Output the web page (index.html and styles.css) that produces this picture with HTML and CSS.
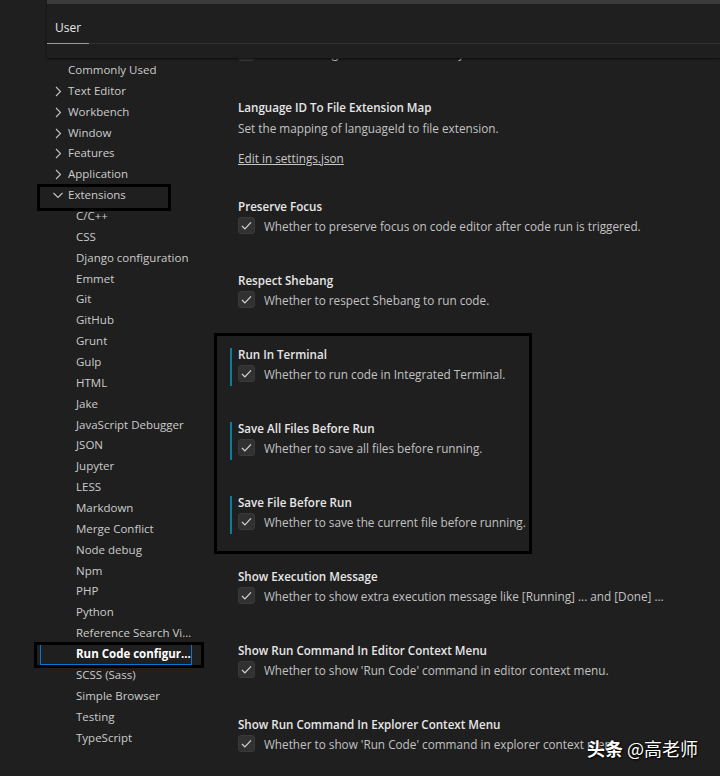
FILE: index.html
```html
<!DOCTYPE html>
<html lang="en">
<head>
    <meta charset="UTF-8">
    <title>Settings</title>
    <link rel="stylesheet" href="styles.css">
</head>
<body>

    <header class="header">
        <div class="search-edge"></div>
        <div class="tabs"><span class="tab">User</span></div>
    </header>

    <div class="page">
        <nav class="tree">
            <div class="row top">Commonly Used</div>
            <div class="row"><svg class="chev" viewBox="0 0 12 12"><path d="M4 2 L8.5 6.5 L4 11"/></svg>Text Editor</div>
            <div class="row"><svg class="chev" viewBox="0 0 12 12"><path d="M4 2 L8.5 6.5 L4 11"/></svg>Workbench</div>
            <div class="row"><svg class="chev" viewBox="0 0 12 12"><path d="M4 2 L8.5 6.5 L4 11"/></svg>Window</div>
            <div class="row"><svg class="chev" viewBox="0 0 12 12"><path d="M4 2 L8.5 6.5 L4 11"/></svg>Features</div>
            <div class="row"><svg class="chev" viewBox="0 0 12 12"><path d="M4 2 L8.5 6.5 L4 11"/></svg>Application</div>
            <div class="row"><svg class="chev" viewBox="0 0 12 12"><path d="M1.5 4 L6 8.5 L10.5 4"/></svg>Extensions</div>
            <div class="row child">C/C++</div>
            <div class="row child">CSS</div>
            <div class="row child">Django configuration</div>
            <div class="row child">Emmet</div>
            <div class="row child">Git</div>
            <div class="row child">GitHub</div>
            <div class="row child">Grunt</div>
            <div class="row child">Gulp</div>
            <div class="row child">HTML</div>
            <div class="row child">Jake</div>
            <div class="row child">JavaScript Debugger</div>
            <div class="row child">JSON</div>
            <div class="row child">Jupyter</div>
            <div class="row child">LESS</div>
            <div class="row child">Markdown</div>
            <div class="row child">Merge Conflict</div>
            <div class="row child">Node debug</div>
            <div class="row child">Npm</div>
            <div class="row child">PHP</div>
            <div class="row child">Python</div>
            <div class="row child">Reference Search View</div>
            <div class="row child selected">Run Code configuration</div>
            <div class="row child">SCSS (Sass)</div>
            <div class="row child">Simple Browser</div>
            <div class="row child">Testing</div>
            <div class="row child">TypeScript</div>
        </nav>

        <main class="content">
            <div class="setting">
                <div class="title">Ignore Selection</div>
                <div class="check-row">
                    <span class="checkbox"></span>
                    <span class="desc">Whether to ignore selection to always run entire file.</span>
                </div>
            </div>

            <div class="setting lang">
                <div class="title">Language ID To File Extension Map</div>
                <div class="text">Set the mapping of languageId to file extension.</div>
                <div class="link">Edit in settings.json</div>
            </div>

            <div class="setting">
                <div class="title">Preserve Focus</div>
                <div class="check-row">
                    <span class="checkbox"><svg viewBox="0 0 16 16"><path d="M3.2 8.6 L6.3 11.6 L12.8 4.6"/></svg></span>
                    <span class="desc">Whether to preserve focus on code editor after code run is triggered.</span>
                </div>
            </div>

            <div class="setting">
                <div class="title">Respect Shebang</div>
                <div class="check-row">
                    <span class="checkbox"><svg viewBox="0 0 16 16"><path d="M3.2 8.6 L6.3 11.6 L12.8 4.6"/></svg></span>
                    <span class="desc">Whether to respect Shebang to run code.</span>
                </div>
            </div>

            <div class="setting modified">
                <div class="title">Run In Terminal</div>
                <div class="check-row">
                    <span class="checkbox"><svg viewBox="0 0 16 16"><path d="M3.2 8.6 L6.3 11.6 L12.8 4.6"/></svg></span>
                    <span class="desc">Whether to run code in Integrated Terminal.</span>
                </div>
            </div>

            <div class="setting modified">
                <div class="title">Save All Files Before Run</div>
                <div class="check-row">
                    <span class="checkbox"><svg viewBox="0 0 16 16"><path d="M3.2 8.6 L6.3 11.6 L12.8 4.6"/></svg></span>
                    <span class="desc">Whether to save all files before running.</span>
                </div>
            </div>

            <div class="setting modified">
                <div class="title">Save File Before Run</div>
                <div class="check-row">
                    <span class="checkbox"><svg viewBox="0 0 16 16"><path d="M3.2 8.6 L6.3 11.6 L12.8 4.6"/></svg></span>
                    <span class="desc">Whether to save the current file before running.</span>
                </div>
            </div>

            <div class="setting">
                <div class="title">Show Execution Message</div>
                <div class="check-row">
                    <span class="checkbox"><svg viewBox="0 0 16 16"><path d="M3.2 8.6 L6.3 11.6 L12.8 4.6"/></svg></span>
                    <span class="desc">Whether to show extra execution message like [Running] ... and [Done] ...</span>
                </div>
            </div>

            <div class="setting">
                <div class="title">Show Run Command In Editor Context Menu</div>
                <div class="check-row">
                    <span class="checkbox"><svg viewBox="0 0 16 16"><path d="M3.2 8.6 L6.3 11.6 L12.8 4.6"/></svg></span>
                    <span class="desc">Whether to show 'Run Code' command in editor context menu.</span>
                </div>
            </div>

            <div class="setting">
                <div class="title">Show Run Command In Explorer Context Menu</div>
                <div class="check-row">
                    <span class="checkbox"><svg viewBox="0 0 16 16"><path d="M3.2 8.6 L6.3 11.6 L12.8 4.6"/></svg></span>
                    <span class="desc">Whether to show 'Run Code' command in explorer context menu.</span>
                </div>
            </div>
        </main>
    </div>

    <!-- annotation boxes drawn over the screenshot -->
    <div class="mark mark-ext"></div>
    <div class="mark mark-run"></div>
    <div class="mark mark-group"></div>

    <div class="watermark"><b>头条</b> @高老师</div>

</body>
</html>
```

FILE: styles.css
```css
body {
    margin: 0;
    background: #1f1f1f;
    color: #cccccc;
    font-family: "Open Sans", "Noto Sans", sans-serif;
    font-size: 11.75px;
    height: 776px;
    overflow: hidden;
    position: relative;
}

.header {
    position: absolute;
    top: 0;
    left: 47px;
    right: 0;
    height: 58px;
    background: #1f1f1f;
    box-shadow: 0 1px 2px #0c0c0c;
    z-index: 2;
}

.search-edge {
    height: 4px;
    background: #3a3a3a;
}

.tabs {
    height: 40px;
    box-shadow: inset 0 -1px #303030;
}

.tab {
    display: inline-block;
    box-sizing: border-box;
    height: 40px;
    padding: 16px 8px 0;
    line-height: 16px;
    font-size: 12px;
    color: #e7e7e7;
    border-bottom: 1px solid #9a9a9a;
}

.page {
    display: flex;
}

.tree {
    width: 230px;
    flex-shrink: 0;
    padding-top: 60px;
    font-size: 11.5px;
}

.row {
    width: 153px;
    height: 20.87px;
    line-height: 20.87px;
    margin-left: 40px;
    box-sizing: border-box;
    padding-left: 12px;
    white-space: nowrap;
    overflow: hidden;
    text-overflow: ellipsis;
}

.row.top {
    padding-left: 28px;
}

.row.child {
    padding-left: 36px;
}

.row.selected {
    width: 152px;
    color: #ffffff;
    font-weight: bold;
    outline: 1px solid #0078d4;
    outline-offset: -1px;
}

.chev {
    width: 12px;
    height: 12px;
    margin-right: 4px;
    vertical-align: -2px;
    fill: none;
    stroke: #c5c5c5;
    stroke-width: 1.1;
}

.content {
    flex: 1;
    padding-top: 26.5px;
}

.setting {
    border-left: 2px solid transparent;
    padding: 0 0 1px 6px;
    margin-bottom: 36px;
}

.setting.modified {
    border-left-color: #0c7d9d;
}

.setting.lang {
    padding-bottom: 0;
    margin-bottom: 33px;
}

.title {
    line-height: 13px;
    font-size: 11.6px;
    font-weight: 600;
    color: #e7e7e7;
}

.text {
    margin-top: 5px;
    line-height: 18px;
    color: #c2c2c2;
}

.link {
    margin-top: 12px;
    line-height: 18px;
    color: #c8c8c8;
    text-decoration: underline;
}

.check-row {
    margin-top: 2px;
    height: 22px;
    display: flex;
    align-items: center;
    gap: 9px;
    white-space: nowrap;
}

.checkbox {
    width: 17px;
    height: 17px;
    box-sizing: border-box;
    background: #313131;
    border: 1px solid #3a3a3a;
    border-radius: 3px;
    display: flex;
    align-items: center;
    justify-content: center;
    flex-shrink: 0;
}

.checkbox svg {
    width: 15px;
    height: 15px;
    fill: none;
    stroke: #d4d4d4;
    stroke-width: 1.3;
}

.desc {
    color: #c2c2c2;
}

.mark {
    position: absolute;
    border: 3px solid #000;
    box-sizing: border-box;
}

.mark-ext {
    left: 37px;
    top: 184px;
    width: 134px;
    height: 27px;
}

.mark-run {
    left: 34px;
    top: 642px;
    width: 170px;
    height: 26px;
}

.mark-group {
    left: 214px;
    top: 333px;
    width: 318px;
    height: 221px;
}

.watermark {
    position: absolute;
    left: 587px;
    top: 735px;
    font-family: "Noto Sans CJK SC", sans-serif;
    font-size: 18px;
    line-height: 26px;
    color: #ffffff;
    text-shadow: 1px 1px 2px #000, 0 0 2px #000;
    z-index: 3;
}
```
